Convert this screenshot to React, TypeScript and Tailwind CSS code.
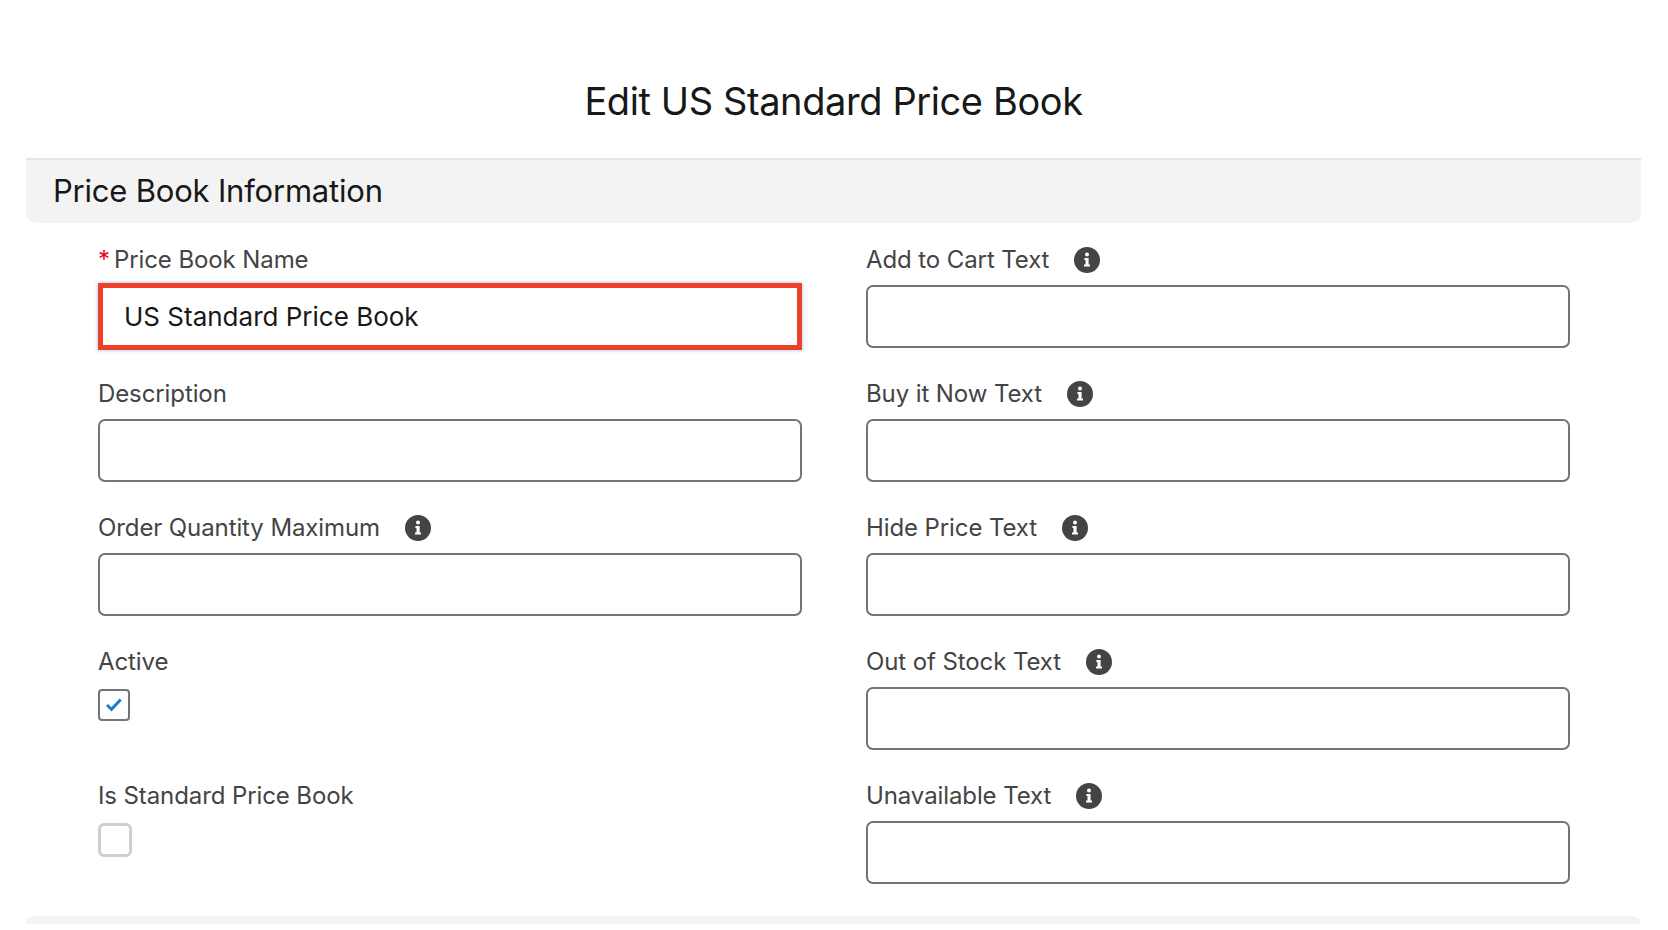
const FONT = "font-['Inter','Liberation_Sans',sans-serif]";

function InfoIcon() {
  return (
    <svg viewBox="0 0 26 26" className="w-[26px] h-[26px] shrink-0" aria-hidden="true">
      <circle cx="13" cy="13" r="13" fill="#444444" />
      <circle cx="13" cy="7.6" r="2" fill="#ffffff" />
      <path d="M10.4 11h4.2v6.6h1.4v1.9h-6v-1.9h1.5v-4.7h-1.1z" fill="#ffffff" />
    </svg>
  );
}

function Label({ text, info, required }: { text: string; info?: boolean; required?: boolean }) {
  return (
    <div className="flex items-center h-[27px] text-[24px] leading-[27px] text-[#444444] tracking-[-0.1px]">
      {required && <span className="text-[#ea001e] w-[16px]">*</span>}
      <span>{text}</span>
      {info && (
        <span className="ml-[25px]">
          <InfoIcon />
        </span>
      )}
    </div>
  );
}

function TextField({ label, info }: { label: string; info?: boolean }) {
  return (
    <div className="h-[134px]">
      <Label text={label} info={info} />
      <input className="mt-[12px] block w-full h-[63px] rounded-[7px] border-2 border-[#747474] bg-white" />
    </div>
  );
}

export default function App() {
  return (
    <div className={`h-[930px] overflow-hidden bg-white px-[26px] ${FONT}`}>
      <div className="w-[1615px]">
        <h1 className="h-[158px] pt-[75px] text-center text-[38px] leading-[52px] font-normal text-[#181818] tracking-[-0.4px]">
          Edit US Standard Price Book
        </h1>
        <div className="h-[65px] border-t-2 border-[#e5e5e5] bg-[#f3f3f3] rounded-b-[10px] pl-[27px] flex items-center text-[31px] text-[#181818] tracking-[-0.2px]">
          Price Book Information
        </div>

        <div className="grid grid-cols-[704px_704px] gap-x-[64px] pl-[72px] pt-[23px]">
          <div>
            <div className="h-[134px]">
              <Label text="Price Book Name" required />
              <input
                defaultValue="US Standard Price Book"
                className="mt-[10px] block w-full h-[67px] border-[5px] border-[#ee4027] shadow-[0_0_4px_#9db9e8] bg-white pl-[21px] text-[26px] text-[#181818] outline-none"
              />
            </div>
            <TextField label="Description" />
            <TextField label="Order Quantity Maximum" info />
            <div className="h-[134px]">
              <Label text="Active" />
              <div className="mt-[14px] w-[32px] h-[32px] rounded-[4px] border-2 border-[#747474] bg-white flex items-center justify-center">
                <svg viewBox="0 0 20 20" className="w-[20px] h-[20px]" aria-hidden="true">
                  <path d="M2 11l2-2 3.4 3.2L15.6 3.6l2.2 2L7.6 16.6z" fill="#2574d4" />
                </svg>
              </div>
            </div>
            <div className="h-[134px]">
              <Label text="Is Standard Price Book" />
              <div className="mt-[14px] w-[34px] h-[34px] rounded-[6px] border-[3px] border-[#cfcfcf] bg-white" />
            </div>
          </div>
          <div>
            <TextField label="Add to Cart Text" info />
            <TextField label="Buy it Now Text" info />
            <TextField label="Hide Price Text" info />
            <TextField label="Out of Stock Text" info />
            <TextField label="Unavailable Text" info />
          </div>
        </div>
        <div className="h-[8px] rounded-t-[10px] bg-[#f3f3f3]" />
      </div>
    </div>
  );
}
